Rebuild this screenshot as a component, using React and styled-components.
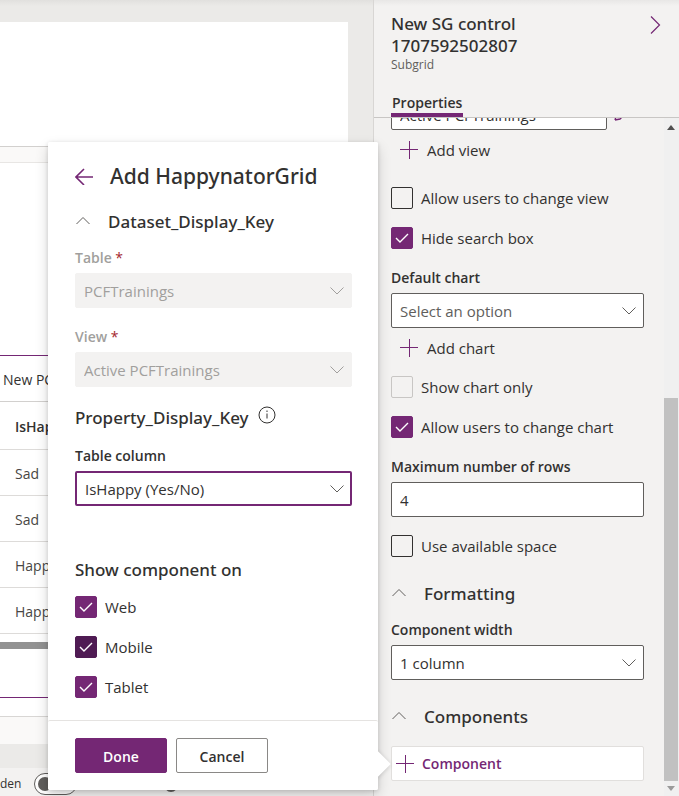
import React from "react";
import styled, { createGlobalStyle } from "styled-components";

const purple = "#742774";
const headingFont = `"Segoe UI", "Noto Sans", "Open Sans", sans-serif`;

const GlobalStyle = createGlobalStyle`
  * { box-sizing: border-box; }
  body {
    margin: 0;
    color: #323130;
    font: 15px/20px "Segoe UI", "Open Sans", "Noto Sans", sans-serif;
  }
  button, input, select { font: inherit; color: inherit; }
  h1, h2, h3 { margin: 0; font-family: ${headingFont}; font-weight: 500; }
`;

const Page = styled.div`
  position: relative;
  display: grid;
  grid-template-columns: minmax(0, 1fr) 306px;
  height: 100vh;
  overflow: hidden;
  background: #ebeae8;
`;

/* ---------- form canvas ---------- */

const Canvas = styled.main`
  display: flex;
  flex-direction: column;
  min-width: 0;
  min-height: 0;
  padding-top: 22px;
  background: linear-gradient(#e1e0de, #ebeae8 6px);
`;

const FormHeader = styled.section`
  flex: none;
  height: 125px;
  margin-right: 25px;
  background: #fff;
  border-bottom: 1px solid #d2d0ce;
`;

const FormBody = styled.section`
  flex: 1;
  display: flex;
  flex-direction: column;
  margin-right: 25px;
  padding: 15px 0 27px;
  background: #faf9f8;
`;

const FormCard = styled.div`
  flex: 1;
  display: flex;
  flex-direction: column;
  background: #fff;
  border-top: 1px solid #e8e6e4;
  border-bottom: 1px solid #d8d6d4;
  padding: 192px 0 18px;
`;

const Subgrid = styled.div`
  flex: 1;
  border-top: 1px solid ${purple};
  border-bottom: 1px solid ${purple};
`;

const SubgridTitle = styled.div`
  height: 46px;
  padding-left: 3px;
  font-size: 14px;
  line-height: 47px;
  white-space: nowrap;
  border-bottom: 1px solid #d2d0ce;
`;

const Grid = styled.table`
  width: 100%;
  border-collapse: collapse;
  text-align: left;
  font-size: 14px;

  th, td {
    height: 46px;
    padding: 4px 0 0 15px;
    border-bottom: 1px solid #dddbd9;
    font-weight: 400;
    color: #484644;
  }
  th { height: 47px; font-weight: 600; color: #323130; }
`;

const GridScroll = styled.div`
  height: 7px;
  margin-top: 8px;
  background: #929292;
`;

const StatusBar = styled.footer`
  flex: none;
  display: flex;
  align-items: center;
  height: 28px;
  margin-top: 24px;
  padding-top: 4px;
  background: #f3f2f1;
`;

const StatusLabel = styled.label`
  flex: none;
  width: 20px;
  font-size: 12px;
  line-height: 16px;
`;

const Toggle = styled.button`
  flex: none;
  width: 43px;
  height: 22px;
  margin: 0 87px 0 14px;
  padding: 3px;
  background: #fff;
  border: 1px solid #605e5c;
  border-radius: 11px;

  &::before {
    content: "";
    display: block;
    width: 14px;
    height: 14px;
    border-radius: 50%;
    background: #605e5c;
  }
`;

const ZoomKnob = styled.span`
  flex: none;
  width: 14px;
  height: 16px;
  border-radius: 50%;
  background: #605e5c;
`;

/* ---------- property panel ---------- */

const Panel = styled.aside`
  display: flex;
  flex-direction: column;
  min-height: 0;
  background: linear-gradient(#e8e7e6, #f3f2f1 6px);
  border-left: 1px solid #d8d6d4;
`;

const PanelHeader = styled.header`
  flex: none;
  display: flex;
  justify-content: space-between;
  height: 93px;
  padding: 13px 14px 0 17px;
`;

const PanelTitle = styled.h1`
  max-width: 160px;
  font-size: 17px;
  line-height: 22px;
`;

const PanelKind = styled.div`
  font-size: 12px;
  line-height: 16px;
  color: #605e5c;
`;

const IconButton = styled.button`
  display: flex;
  align-items: center;
  justify-content: center;
  width: 20px;
  height: 24px;
  padding: 0;
  color: ${purple};
  background: none;
  border: 0;
`;

const TabList = styled.div`
  flex: none;
  display: flex;
  padding-left: 17px;
  border-bottom: 1px solid #c8c6c4;
`;

const Tab = styled.button`
  height: 24px;
  padding: 0 1px;
  font-size: 14px;
  line-height: 18px;
  font-weight: 600;
  background: none;
  border: 0;
  border-bottom: 4px solid ${purple};
`;

const PanelBody = styled.div`
  flex: 1;
  display: flex;
  min-height: 0;
`;

const Fields = styled.div`
  flex: 1;
  min-width: 0;
  display: flex;
  flex-direction: column;
  justify-content: flex-end;
  overflow: hidden;
  padding: 0 20px 15px 17px;

  > * { flex: none; }
`;

const Scrollbar = styled.div`
  flex: none;
  display: flex;
  flex-direction: column;
  align-items: center;
  width: 15px;
  padding: 7px 1px 5px 0;
  background: #f0f0f0;
`;

const ScrollGap = styled.div`
  flex: 263;
`;

const ScrollThumb = styled.div`
  flex: 376;
  width: 14px;
  margin-bottom: 5px;
  background: #c1c1c1;
`;

/* ---------- shared controls ---------- */

const Label = styled.label`
  display: block;
  margin: ${(p) => p.$gap}px 0 5px;
  font-size: 14px;
  font-weight: 600;
  color: ${(p) => (p.$muted ? "#a19f9d" : "#323130")};

  span { font-weight: 400; color: #a4262c; }
`;

const SelectWrap = styled.div`
  display: grid;
  align-items: center;

  > * { grid-area: 1 / 1; }
  > svg {
    justify-self: end;
    margin-right: 8px;
    color: ${(p) => (p.$muted ? "#a19f9d" : "#605e5c")};
    pointer-events: none;
  }
`;

const SelectBox = styled.select`
  appearance: none;
  width: 100%;
  height: 35px;
  padding: 1px 30px 0 8px;
  color: ${(p) => (p.$placeholder ? "#605e5c" : "#323130")};
  background: #fff;
  border: ${(p) => (p.$focused ? `2px solid ${purple}` : "1px solid #605e5c")};
  border-radius: 2px;
  opacity: 1;

  &:disabled {
    padding-top: 0;
    color: #a19f9d;
    background: #f3f2f1;
    border-color: #f3f2f1;
  }
`;

const TextInput = styled.input`
  width: 100%;
  height: 35px;
  padding: 0 8px;
  background: #fff;
  border: 1px solid #605e5c;
  border-radius: 2px;
`;

const ViewRow = styled.div`
  display: flex;
  align-items: flex-end;
  gap: 4px;

  > input { width: 216px; padding-top: 4px; }
`;

const AddButton = styled.button`
  display: flex;
  align-items: center;
  gap: 9px;
  height: 40px;
  padding: 0 9px;
  background: none;
  border: 0;

  svg { color: ${purple}; }
`;

const CheckLabel = styled.label`
  display: flex;
  align-items: center;
  gap: 8px;
  height: 22px;
  margin-top: ${(p) => p.$gap}px;
  line-height: 24px;
`;

const CheckCell = styled.span`
  display: grid;
  place-items: center;

  > * { grid-area: 1 / 1; }
  > svg { color: #fff; pointer-events: none; }
`;

const CheckInput = styled.input`
  appearance: none;
  width: 22px;
  height: 22px;
  margin: 0;
  background: transparent;
  border: 1px solid #323130;
  border-radius: 2px;

  &:checked {
    background: ${(p) => (p.$dark ? "#4f1b53" : purple)};
    border-color: ${(p) => (p.$dark ? "#4f1b53" : purple)};
  }
  &:disabled { border-color: #c8c6c4; }
`;

const SectionToggle = styled.button`
  display: flex;
  align-items: center;
  gap: 18px;
  height: 24px;
  margin-top: ${(p) => p.$gap}px;
  padding: 0 1px;
  font-family: ${headingFont};
  font-size: 17px;
  font-weight: 500;
  background: none;
  border: 0;

  svg { color: #605e5c; }
`;

const ComponentButton = styled.button`
  display: flex;
  align-items: center;
  gap: 8px;
  height: 35px;
  margin-top: 17px;
  padding: 0 4px;
  font-size: 14px;
  font-weight: 600;
  color: ${purple};
  background: #fff;
  border: 1px solid #e1dfdd;
  border-radius: 2px;
`;

/* ---------- callout ---------- */

const Callout = styled.div`
  position: absolute;
  right: 301px;
  bottom: 6px;
  width: 330px;
  background: #fff;
  border-radius: 2px;
  box-shadow: 0 6px 14px rgba(0, 0, 0, 0.16), 0 1px 4px rgba(0, 0, 0, 0.14);

  &::before {
    content: "";
    position: absolute;
    right: -9px;
    bottom: 17px;
    width: 18px;
    height: 18px;
    background: #fff;
    box-shadow: 0 1px 5px rgba(0, 0, 0, 0.2);
    transform: rotate(45deg);
  }
`;

const CalloutBody = styled.div`
  position: relative;
  padding: 20px 26px 22px 27px;
  background: #fff;
  border-radius: 2px;
`;

const CalloutHeader = styled.header`
  display: flex;
  align-items: center;
  gap: 16px;
  height: 28px;
  margin-bottom: 20px;

  > button { width: 19px; }
`;

const CalloutTitle = styled.h2`
  font-size: 21px;
  line-height: 28px;
  white-space: nowrap;
`;

const SubHeading = styled.h3`
  display: flex;
  gap: 9px;
  height: 24px;
  margin-top: ${(p) => p.$gap}px;
  font-size: 17px;
  line-height: 24px;
`;

const CalloutFooter = styled.footer`
  position: relative;
  display: flex;
  gap: 9px;
  padding: 17px 27px;
  background: #fff;
  border-top: 1px solid #e5e3e1;
  border-radius: 2px;
`;

const ActionButton = styled.button`
  width: 92px;
  height: 35px;
  padding: 2px 0 0;
  font-size: 14px;
  font-weight: 600;
  color: ${(p) => (p.$primary ? "#fff" : "#323130")};
  background: ${(p) => (p.$primary ? purple : "#fff")};
  border: 1px solid ${(p) => (p.$primary ? purple : "#8a8886")};
  border-radius: 2px;
`;

/* ---------- icons ---------- */

function Icon({ w, h, d, stroke = 1 }) {
  return (
    <svg width={w} height={h} viewBox={`0 0 ${w} ${h}`} fill="none" stroke="currentColor" strokeWidth={stroke} aria-hidden="true">
      <path d={d} />
    </svg>
  );
}

const ChevronDown = () => <Icon w={14} h={10} d="M.5 1.500 7 8l6.500-6.500" />;
const ChevronUp = () => <Icon w={14} h={10} d="M.5 7 7 .5l6.500 6.500" />;
const Plus = () => <Icon w={18} h={18} d="M9.500 0v18M0 8.500h18" />;
const Check = () => <Icon w={14} h={12} stroke={1.4} d="M1 6l4 4 8-8" />;
const BackArrow = () => <Icon w={19} h={18} stroke={1.6} d="M18 10H1M9 2 1 10l8 8" />;
const ChevronRight = () => <Icon w={11} h={18} stroke={1.2} d="M1 .5 9.500 9 1 17.500" />;
const Pencil = () => <Icon w={14} h={16} stroke={1.4} d="M1 10 2.500 5 7 0M1 10l5-1 5-5" />;

const InfoIcon = () => (
  <svg width="18" height="18" viewBox="0 0 18 18" fill="none" stroke="currentColor" aria-hidden="true">
    <circle cx="9" cy="9" r="8" />
    <path d="M9 7.500v5M9 4.500v1.500" />
  </svg>
);

const ScrollArrow = ({ up }) => (
  <svg width="8" height="5" viewBox="0 0 8 5" aria-hidden="true">
    <path d={up ? "M0 5 4 0l4 5Z" : "M0 0h8L4 5Z"} fill={up ? "#505050" : "#9a9a9a"} />
  </svg>
);

/* ---------- composed controls ---------- */

function Checkbox({ label, gap, checked, disabled, dark }) {
  return (
    <CheckLabel $gap={gap}>
      <CheckCell>
        <CheckInput type="checkbox" defaultChecked={checked} disabled={disabled} $dark={dark} />
        {checked && <Check />}
      </CheckCell>
      {label}
    </CheckLabel>
  );
}

function SelectField({ id, label, gap, value, required, disabled, focused, placeholder }) {
  return (
    <div>
      <Label htmlFor={id} $gap={gap} $muted={disabled}>
        {label}
        {required && <span> *</span>}
      </Label>
      <SelectWrap $muted={disabled}>
        <SelectBox id={id} disabled={disabled} $focused={focused} $placeholder={placeholder}>
          <option>{value}</option>
        </SelectBox>
        <ChevronDown />
      </SelectWrap>
    </div>
  );
}

const rows = ["Sad", "Sad", "Happy", "Happy"];

export default function App() {
  return (
    <>
      <GlobalStyle />
      <Page>
        <Canvas>
          <FormHeader />
          <FormBody>
            <FormCard>
              <Subgrid>
                <SubgridTitle>New PCFTraining</SubgridTitle>
                <Grid>
                  <thead>
                    <tr><th>IsHappy</th></tr>
                  </thead>
                  <tbody>
                    {rows.map((mood, i) => (
                      <tr key={i}><td>{mood}</td></tr>
                    ))}
                  </tbody>
                </Grid>
                <GridScroll />
              </Subgrid>
            </FormCard>
          </FormBody>
          <StatusBar>
            <StatusLabel htmlFor="show-hidden">den</StatusLabel>
            <Toggle id="show-hidden" type="button" />
            <ZoomKnob />
          </StatusBar>
        </Canvas>

        <Panel>
          <PanelHeader>
            <div>
              <PanelTitle>New SG control 1707592502807</PanelTitle>
              <PanelKind>Subgrid</PanelKind>
            </div>
            <IconButton type="button" aria-label="Collapse panel"><ChevronRight /></IconButton>
          </PanelHeader>
          <TabList role="tablist">
            <Tab type="button" role="tab" aria-selected="true">Properties</Tab>
          </TabList>
          <PanelBody>
            <Fields>
              <ViewRow>
                <TextInput aria-label="Default view" defaultValue="Active PCFTrainings" />
                <IconButton type="button" aria-label="Edit view"><Pencil /></IconButton>
              </ViewRow>
              <AddButton type="button"><Plus />Add view</AddButton>
              <Checkbox label="Allow users to change view" gap={17} />
              <Checkbox label="Hide search box" gap={18} checked />
              <SelectField id="default-chart" label="Default chart" gap={19} value="Select an option" placeholder />
              <AddButton type="button"><Plus />Add chart</AddButton>
              <Checkbox label="Show chart only" gap={8} disabled />
              <Checkbox label="Allow users to change chart" gap={18} checked />
              <Label htmlFor="max-rows" $gap={19}>Maximum number of rows</Label>
              <TextInput id="max-rows" defaultValue="4" />
              <Checkbox label="Use available space" gap={18} />
              <SectionToggle type="button" $gap={25}><ChevronUp />Formatting</SectionToggle>
              <SelectField id="component-width" label="Component width" gap={14} value="1 column" />
              <SectionToggle type="button" $gap={25}><ChevronUp />Components</SectionToggle>
              <ComponentButton type="button"><Plus />Component</ComponentButton>
            </Fields>
            <Scrollbar aria-hidden="true">
              <ScrollArrow up />
              <ScrollGap />
              <ScrollThumb />
              <ScrollArrow />
            </Scrollbar>
          </PanelBody>
        </Panel>

        <Callout role="dialog" aria-labelledby="callout-title">
          <CalloutBody>
            <CalloutHeader>
              <IconButton type="button" aria-label="Back"><BackArrow /></IconButton>
              <CalloutTitle id="callout-title">Add HappynatorGrid</CalloutTitle>
            </CalloutHeader>
            <SectionToggle type="button" $gap={0}><ChevronUp />Dataset_Display_Key</SectionToggle>
            <SelectField id="table" label="Table" gap={14} value="PCFTrainings" required disabled />
            <SelectField id="view" label="View" gap={19} value="Active PCFTrainings" required disabled />
            <SubHeading $gap={19}>Property_Display_Key <InfoIcon /></SubHeading>
            <SelectField id="table-column" label="Table column" gap={16} value="IsHappy (Yes/No)" focused />
            <SubHeading $gap={52}>Show component on</SubHeading>
            <Checkbox label="Web" gap={14} checked />
            <Checkbox label="Mobile" gap={18} checked dark />
            <Checkbox label="Tablet" gap={18} checked />
          </CalloutBody>
          <CalloutFooter>
            <ActionButton type="button" $primary>Done</ActionButton>
            <ActionButton type="button">Cancel</ActionButton>
          </CalloutFooter>
        </Callout>
      </Page>
    </>
  );
}
